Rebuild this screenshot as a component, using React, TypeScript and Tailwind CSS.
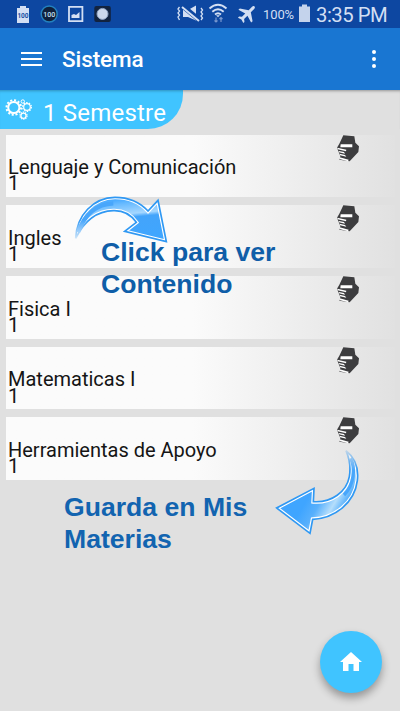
import React from "react";

const subjects = [
  "Lenguaje y Comunicación",
  "Ingles",
  "Fisica I",
  "Matematicas I",
  "Herramientas de Apoyo",
];

function StatusBar() {
  return (
    <header className="flex h-7 items-center bg-[#0d47a1] text-[#d3dff3]">
      <svg className="h-7 w-[115px] shrink-0" viewBox="0 0 115 28">
        <path d="M20 6h6v2h3v15H17V8h3z" fill="#d3dff3" />
        <text x="23" y="17.5" textAnchor="middle" fontSize="6.5" fontWeight="700" fill="#174da2" fontFamily="Roboto">100</text>
        <circle cx="49.2" cy="14" r="8" fill="#10203b" stroke="#2481be" strokeWidth="1.5" />
        <text x="49.2" y="16.5" textAnchor="middle" fontSize="7" fontWeight="500" fill="#c3e3f8" fontFamily="Roboto">100</text>
        <path d="M69 6.8h13.4v14.4H69z" fill="none" stroke="#d3dff3" strokeWidth="1.8" />
        <path d="M71.5 18v-3l2.5-1 2 1 3.5-3v6z" fill="#d3dff3" />
        <rect x="94.3" y="6" width="16.5" height="16" rx="2" fill="#12233f" />
        <circle cx="102.5" cy="13.9" r="5.5" fill="#cbd7eb" stroke="#8fa3c4" />
      </svg>
      <svg className="ml-[60px] h-7 w-[85px] shrink-0" viewBox="175 0 85 28" fill="none" stroke="#d3dff3">
        <path d="m179.500 7-1.500 2 1.500 2-1.500 2 1.500 2-1.500 2 1.500 3M201 8l1.500 2-1.500 2 1.500 2-1.500 2 1.500 2-1.500 2" strokeWidth="1.3" />
        <path d="M183 10h5l8-4.500v15L188 17h-5z" fill="#d3dff3" stroke="none" />
        <path d="m182.500 6 17 14" stroke="#0d47a1" strokeWidth="5" />
        <path d="m182 7 17 14" strokeWidth="2" />
        <path d="M209.500 8.500q8.500-7.500 17 0M212.300 11.700q5.700-5 11.400 0M215 14.500q3-2.500 6 0" strokeWidth="1.9" />
        <path d="m216 15.200 2 2 2-2z" fill="#d3dff3" stroke="none" />
        <path d="M216 22v-4.500m-1.500 3 1.500 1.500 1.500-1.500M221 17.500v4.500m-1.500-3 1.500-1.500 1.500 1.500" stroke="#7797ce" strokeWidth="1.200" />
        <g transform="translate(247.500 13.500) rotate(45) scale(.9)" fill="#d3dff3" stroke="none">
          <path d="M0-11C1.100-11 1.700-10 1.700-8.800V-3.500L10 2v2.300L1.700 1.800V7L4.200 9v1.800L0 9.600-4.200 10.800V9L-1.700 7V1.800L-10 4.300V2L-1.700-3.500v-5.300C-1.700-10-1.100-11 0-11z" />
        </g>
      </svg>
      <span className="ml-[3px] w-[36px] shrink-0 pt-[2px] text-[13px] tracking-[-0.1px]">100%</span>
      <svg className="h-7 w-3 shrink-0" viewBox="0 0 12 28">
        <path d="M3 4.500h5v2h3v15.500H0V6.500h3z" fill="#c4d3ec" />
      </svg>
      <span className="ml-[5px] shrink-0 whitespace-nowrap pt-[2px] text-[20.300px] leading-6 tracking-[-0.5px]">3:35 PM</span>
    </header>
  );
}

function AppBar() {
  return (
    <nav className="flex h-[62px] items-center bg-[#1976d2] text-white">
      <div className="ml-[21px] flex w-[21px] flex-col gap-1">
        <i className="h-0.5 bg-white" />
        <i className="h-0.5 bg-white" />
        <i className="h-0.5 bg-white" />
      </div>
      <h1 className="ml-[20px] text-[22.5px] font-medium leading-[62px] tracking-[-0.1px]">Sistema</h1>
      <div className="ml-auto mr-[24px] flex flex-col gap-[2.500px]">
        <i className="size-[4.500px] rounded-full bg-white" />
        <i className="size-[4.500px] rounded-full bg-white" />
        <i className="size-[4.500px] rounded-full bg-white" />
      </div>
    </nav>
  );
}

function Gears() {
  return (
    <svg className="ml-[5px] mt-[8px] h-[22px] w-[28px]" viewBox="5 98 28 22" fill="none" stroke="white">
      <circle cx="13.800" cy="107.500" r="5.600" strokeWidth="2" />
      <circle cx="13.800" cy="107.500" r="7.300" strokeWidth="2" strokeDasharray="2.050 1.770" />
      <circle cx="27" cy="107" r="3.300" strokeWidth="1.200" />
      <circle cx="27" cy="107" r="4.400" strokeWidth="1.200" strokeDasharray="1.500 1.260" />
      <circle cx="23.500" cy="115.700" r="2.600" strokeWidth="1.300" />
      <circle cx="23.500" cy="115.700" r="3.600" strokeWidth="1.100" strokeDasharray="1.300 .960" />
      <circle cx="22.800" cy="101.500" r="1.700" strokeWidth="1" />
    </svg>
  );
}

function Books() {
  return (
    <svg className="mr-[36px] h-[28px] w-[24px] shrink-0" viewBox="0 0 72 84">
      <path d="M25 1 58 4 61 23 72 34 70 51 44 79 13 74 16 64 6 38 13 26z" fill="#3d3d3f" />
      <path d="M17 28H52V37H16z" fill="#fff" />
      <path d="M7 38 34 44 33 49 8 43zM11 48 27 51 30 56 12 52zM14 56 30 60 34 65 15 61z" fill="#fff" />
      <path d="M14 67 41 74 39 79 13 72z" fill="#fff" />
    </svg>
  );
}

function ClickArrow() {
  const d = "M47 160C50 90 100 38 165 37C205 37 240 52 264 78L294 46L319 170L194 139L229 112C210 85 185 76 160 77C110 78 73 108 47 160Z";
  return (
    <svg className="pointer-events-none absolute left-[60px] top-[185px] h-[70px] w-[120px]" viewBox="0 0 360 210">
      <defs>
        <linearGradient id="clickFill" x1=".25" y1="0" x2=".45" y2="1">
          <stop offset="0" stopColor="#2c9bff" />
          <stop offset=".2" stopColor="#6bbcff" />
          <stop offset=".42" stopColor="#a5d7ff" />
          <stop offset=".5" stopColor="#43a4fb" />
          <stop offset="1" stopColor="#3fa6ff" />
        </linearGradient>
        <linearGradient id="clickFade" gradientUnits="userSpaceOnUse" x1="0" y1="165" x2="0" y2="105">
          <stop offset="0" stopColor="white" stopOpacity=".15" />
          <stop offset="1" stopColor="white" />
        </linearGradient>
        <mask id="clickMask" maskUnits="userSpaceOnUse" x="0" y="0" width="360" height="210">
          <rect width="230" height="210" fill="url(#clickFade)" />
          <rect x="180" width="180" height="210" fill="white" />
        </mask>
        <clipPath id="clickClip"><path d={d} /></clipPath>
      </defs>
      <g mask="url(#clickMask)">
        <path d={d} fill="url(#clickFill)" />
        <path d={d} clipPath="url(#clickClip)" fill="none" stroke="white" strokeWidth="12" />
        <path d={d} fill="none" stroke="#2f98f3" strokeWidth="5" />
        <path d="M54 142C75 85 110 57 160 55" fill="none" stroke="#48a6fb" strokeWidth="13" />
      </g>
    </svg>
  );
}

function SaveArrow() {
  const d = "M258 122C287 145 296 178 292 212C284 278 225 325 158 328L150 370L50 294L162 235L160 275C215 279 260 245 268 200C273 170 268 145 258 122Z";
  return (
    <svg className="pointer-events-none absolute left-[260px] top-[410px] h-[130px] w-[120px]" viewBox="0 0 360 390">
      <defs>
        <linearGradient id="saveFill" gradientUnits="userSpaceOnUse" x1="140" y1="270" x2="235" y2="325">
          <stop offset="0" stopColor="#3fa5ff" />
          <stop offset=".35" stopColor="#58b0fc" />
          <stop offset=".7" stopColor="#b5defc" />
          <stop offset="1" stopColor="#49a9fb" />
        </linearGradient>
        <linearGradient id="saveFade" gradientUnits="userSpaceOnUse" x1="0" y1="118" x2="0" y2="180">
          <stop offset="0" stopColor="white" stopOpacity=".15" />
          <stop offset="1" stopColor="white" />
        </linearGradient>
        <mask id="saveMask" maskUnits="userSpaceOnUse" x="0" y="0" width="360" height="390"><rect width="360" height="390" fill="url(#saveFade)" /></mask>
        <clipPath id="saveClip"><path d={d} /></clipPath>
      </defs>
      <g mask="url(#saveMask)">
        <path d={d} fill="url(#saveFill)" />
        <path d={d} clipPath="url(#saveClip)" fill="none" stroke="white" strokeWidth="12" />
        <path d={d} fill="none" stroke="#2f98f3" strokeWidth="5" />
        <path d="M272 145C286 174 284 222 252 255" fill="none" stroke="#48a6fb" strokeWidth="10" />
      </g>
    </svg>
  );
}

export default function App() {
  return (
    <div className="relative h-[711px] w-[400px] overflow-hidden bg-[#e0e0e0] font-[Roboto,sans-serif]">
      <StatusBar />
      <AppBar />
      <main>
        <div className="h-[39px] shadow-[inset_0_3px_3px_-2px_#0005]">
          <div className="flex h-[39px] w-[183px] rounded-br-[35px] bg-[#40c4ff] text-white shadow-[inset_0_3px_3px_-2px_#0004]">
            <Gears />
            <h2 className="ml-[10px] whitespace-nowrap text-[24px] leading-[46px] tracking-[0.2px]">1 Semestre</h2>
          </div>
        </div>
        <ul className="ml-[6px] mt-[5.700px] flex w-[389px] flex-col gap-[8px]">
          {subjects.map((name) => (
            <li key={name} className="flex h-[62.700px] justify-between bg-linear-to-r from-[#fbfbfb] from-48% to-[#e1e1e1]">
              <div className="ml-[2px] pt-[24.500px] text-[20px] leading-[16.300px] text-[#151515]">
                <p className="whitespace-nowrap">{name}</p>
                <p>1</p>
              </div>
              <Books />
            </li>
          ))}
        </ul>
      </main>
      <ClickArrow />
      <SaveArrow />
      <p className="absolute left-[101px] top-[236px] whitespace-nowrap font-['Liberation_Sans',Arial,sans-serif] text-[26.600px] font-bold leading-[32px] text-[#0f5ea8]">
        Click para ver<br />Contenido
      </p>
      <p className="absolute left-[64px] top-[491px] whitespace-nowrap font-['Liberation_Sans',Arial,sans-serif] text-[26.600px] font-bold leading-[32px] text-[#1264b0]">
        Guarda en Mis<br />Materias
      </p>
      <button aria-label="Inicio" className="absolute left-[320px] top-[631px] flex size-[62px] items-center justify-center rounded-full bg-[#40c4ff] shadow-[0_5px_8px_#0005]">
        <svg className="size-[22px]" viewBox="0 0 22 22">
          <path d="M11 1 22 11h-3v9h-5.500v-7h-5v7H3v-9H0z" fill="white" />
        </svg>
      </button>
    </div>
  );
}
